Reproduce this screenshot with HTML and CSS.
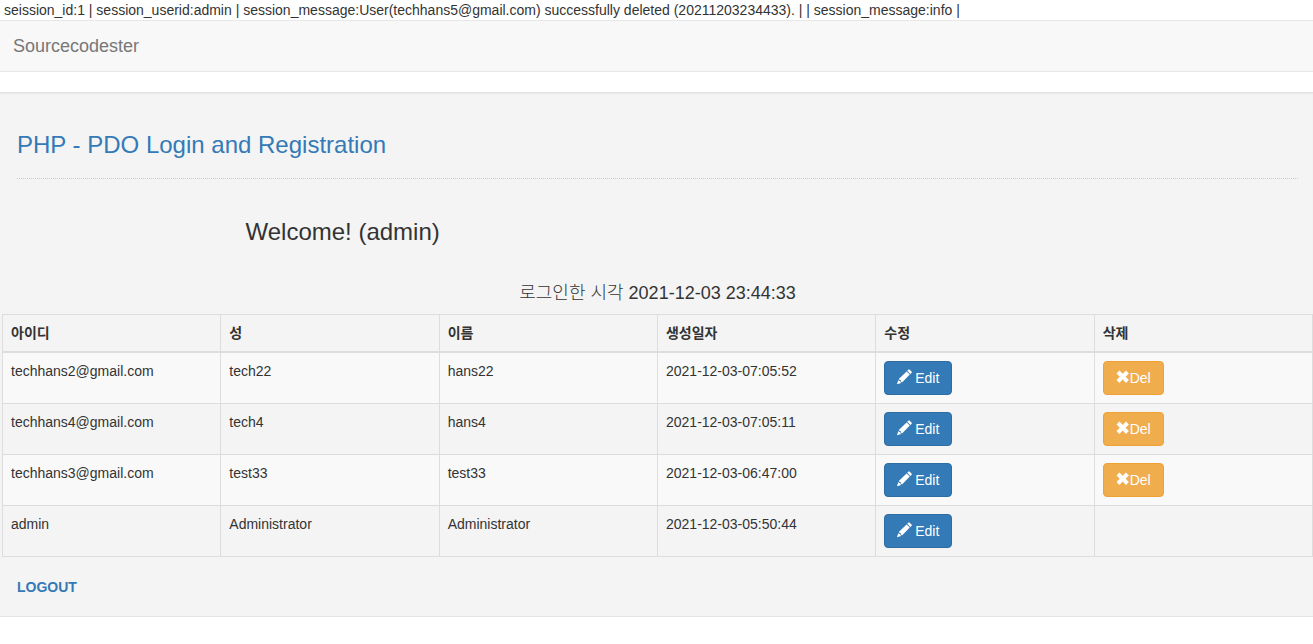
FILE: index.html
```html
<!DOCTYPE html>
<html lang="ko">
<head>
  <meta charset="utf-8">
  <meta name="viewport" content="width=device-width, initial-scale=1">
  <title>PHP - PDO Login and Registration</title>
  <link rel="stylesheet" href="styles.css">
</head>
<body>
  <svg class="sprite" aria-hidden="true">
    <symbol id="pencil" viewBox="0 0 14 14" overflow="visible">
      <path d="M11.300-.3a1 1 0 0 1 1.400 0l1.800 1.800a1 1 0 0 1 0 1.400L13.400 4 10.200.8zM9.600 1.400l3.200 3.200-7.800 7.800-1-1-.2-1.100-1-.2-1-1zM1.400 10l.9 1 1 .1.200 1.200.7.700L-.1 14.200z"/>
    </symbol>
    <symbol id="remove" viewBox="0 0 14 14" overflow="visible">
      <path d="M3.400.5 6.700 3.800 10 .5 12.900 3.400 9.600 6.700l3.300 3.300-2.900 2.900-3.300-3.300-3.300 3.300L.5 10l3.300-3.300L.5 3.400z"/>
    </symbol>
  </svg>
  <div class="session">seission_id:1 | session_userid:admin | session_message:User(techhans5@gmail.com) successfully deleted (20211203234433). | | session_message:info |</div>
  <nav class="navbar">
    <a class="navbar-brand" href="#">Sourcecodester</a>
  </nav>
  <main class="well">
    <div class="content">
      <h3 class="text-primary">PHP - PDO Login and Registration</h3>
      <hr>
      <h3 class="welcome">Welcome! (admin)</h3>
    </div>
    <table class="table">
      <caption>로그인한 시각 2021-12-03 23:44:33</caption>
      <thead>
        <tr>
          <th>아이디</th>
          <th>성</th>
          <th>이름</th>
          <th>생성일자</th>
          <th>수정</th>
          <th>삭제</th>
        </tr>
      </thead>
      <tbody>
        <tr>
          <td>techhans2@gmail.com</td>
          <td>tech22</td>
          <td>hans22</td>
          <td>2021-12-03-07:05:52</td>
          <td><button type="button" class="btn btn-primary"><svg class="icon"><use href="#pencil"/></svg> Edit</button></td>
          <td><button type="button" class="btn btn-warning"><svg class="icon"><use href="#remove"/></svg>Del</button></td>
        </tr>
        <tr>
          <td>techhans4@gmail.com</td>
          <td>tech4</td>
          <td>hans4</td>
          <td>2021-12-03-07:05:11</td>
          <td><button type="button" class="btn btn-primary"><svg class="icon"><use href="#pencil"/></svg> Edit</button></td>
          <td><button type="button" class="btn btn-warning"><svg class="icon"><use href="#remove"/></svg>Del</button></td>
        </tr>
        <tr>
          <td>techhans3@gmail.com</td>
          <td>test33</td>
          <td>test33</td>
          <td>2021-12-03-06:47:00</td>
          <td><button type="button" class="btn btn-primary"><svg class="icon"><use href="#pencil"/></svg> Edit</button></td>
          <td><button type="button" class="btn btn-warning"><svg class="icon"><use href="#remove"/></svg>Del</button></td>
        </tr>
        <tr>
          <td>admin</td>
          <td>Administrator</td>
          <td>Administrator</td>
          <td>2021-12-03-05:50:44</td>
          <td><button type="button" class="btn btn-primary"><svg class="icon"><use href="#pencil"/></svg> Edit</button></td>
          <td></td>
        </tr>
      </tbody>
    </table>
    <div class="content">
      <a class="logout" href="#">LOGOUT</a>
    </div>
  </main>
</body>
</html>
```
FILE: styles.css
```css
* {
  box-sizing: border-box;
}
body {
  margin: 0;
  font-family: "Liberation Sans", Arial, "Noto Sans CJK KR", sans-serif;
  font-size: 14px;
  line-height: 20px;
  color: #333;
  background: #fff;
}
a {
  color: #337ab7;
  text-decoration: none;
}
.sprite {
  display: none;
}
.session {
  padding-left: 4px;
}
.navbar {
  margin-bottom: 20px;
  border: solid #e7e7e7;
  border-width: 1px 0;
  background: #f8f8f8;
}
.navbar-brand {
  display: inline-block;
  padding: 15px 13px;
  vertical-align: top;
  font-size: 18px;
  color: #777;
}
.well {
  padding: 19px 0;
  border: solid #e3e3e3;
  border-width: 1px 0;
  background: #f4f4f4;
  box-shadow: inset 0 1px 1px rgba(0, 0, 0, .05);
}
.content {
  padding: 0 15px 0 17px;
}
h3 {
  margin: 20px 0;
  font-size: 24px;
  font-weight: 500;
  line-height: 26px;
}
.text-primary {
  color: #337ab7;
}
hr {
  margin: 20px 0 40px;
  border: 0;
  border-top: 1px dotted #ccc;
}
/* two grid columns plus the gutter */
.welcome {
  margin-bottom: 30px;
  margin-left: calc(100% / 6 + 15px);
}
.table {
  width: calc(100% - 2px);
  margin: 0 0 20px 2px;
  table-layout: fixed;
  border-collapse: collapse;
}
caption {
  padding: 8px 0 10px;
  font-size: 18px;
  font-weight: 300;
  line-height: 21px;
}
th,
td {
  padding: 8px;
  border: 1px solid #ddd;
  text-align: left;
  vertical-align: top;
}
th {
  border-bottom-width: 2px;
}
tbody tr:nth-child(odd) {
  background: #f9f9f9;
}
.btn {
  display: block;
  padding: 6px 12px;
  border: 1px solid;
  border-radius: 4px;
  font: inherit;
  color: #fff;
  cursor: pointer;
}
.btn-primary {
  border-color: #2e6da4;
  background: #337ab7;
}
.btn-warning {
  border-color: #eea236;
  background: #f0ad4e;
}
.icon {
  width: 14px;
  height: 14px;
  overflow: visible;
  vertical-align: -1px;
  fill: currentColor;
}
.logout {
  font-weight: bold;
}
```
